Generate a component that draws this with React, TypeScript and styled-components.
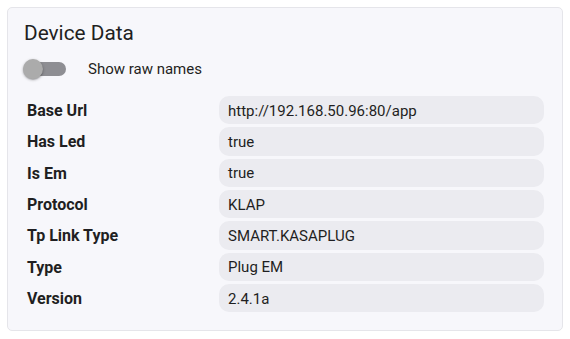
import React, { useState } from "react";
import styled, { createGlobalStyle } from "styled-components";

const GlobalStyle = createGlobalStyle`
  html, body { margin: 0; padding: 0; background: #ffffff; }
  body {
    font-family: Roboto, "Noto Sans", "Liberation Sans", sans-serif;
    color: #1f1f22;
  }
`;

const Page = styled.div`
  padding: 7px;
`;

const Card = styled.section`
  background: #f7f7fb;
  border: 1px solid #e5e5ea;
  border-radius: 5px;
  padding: 13px 16px 18px 16px;
  box-sizing: border-box;
  height: 324px;
  display: flex;
  flex-direction: column;
`;

const Title = styled.h2`
  margin: 0;
  font-size: 20.8px;
  line-height: 24px;
  font-weight: 400;
  color: #1f1f22;
`;

const ToggleRow = styled.label`
  display: flex;
  align-items: center;
  height: 28px;
  margin-top: 10px;
  cursor: pointer;
  user-select: none;
`;

const SwitchBox = styled.span`
  position: relative;
  width: 44px;
  height: 28px;
  margin-left: -2px;
  flex-shrink: 0;
`;

const Track = styled.span<{ $on: boolean }>`
  position: absolute;
  left: 7px;
  right: 0;
  top: 7px;
  height: 14px;
  border-radius: 7px;
  background: ${(p) => (p.$on ? "#8fa6d8" : "#8e8e93")};
`;

const Thumb = styled.span<{ $on: boolean }>`
  position: absolute;
  top: 4px;
  left: ${(p) => (p.$on ? "23px" : "1px")};
  width: 20px;
  height: 20px;
  border-radius: 50%;
  background: ${(p) => (p.$on ? "#3f63b8" : "#ababab")};
  box-shadow: 0 1px 3px rgba(0, 0, 0, 0.3), 0 1px 1px rgba(0, 0, 0, 0.14);
  transition: left 0.15s;
`;

const ToggleText = styled.span`
  margin-left: 22px;
  font-size: 15px;
  color: #1f1f22;
`;

const DataGrid = styled.dl`
  margin: 13px 2px 0 3px;
  display: grid;
  grid-template-columns: 192px 1fr;
  grid-auto-rows: 28.33px;
  row-gap: 3px;
  align-items: center;
`;

const Key = styled.dt`
  font-size: 16px;
  font-weight: 700;
  color: #1f1f22;
  padding-top: 1px;
`;

const Value = styled.dd`
  margin: 0;
  height: 100%;
  display: flex;
  align-items: center;
  padding: 1px 9px 0 9px;
  box-sizing: border-box;
  border-radius: 10px;
  background: #ebebf0;
  font-size: 15px;
  color: #1f1f22;
`;

const rows: [string, string, string][] = [
  ["base_url", "Base Url", "http://192.168.50.96:80/app"],
  ["has_led", "Has Led", "true"],
  ["is_em", "Is Em", "true"],
  ["protocol", "Protocol", "KLAP"],
  ["tp_link_type", "Tp Link Type", "SMART.KASAPLUG"],
  ["type", "Type", "Plug EM"],
  ["version", "Version", "2.4.1a"],
];

export default function App() {
  const [raw, setRaw] = useState(false);
  return (
    <>
      <GlobalStyle />
      <Page>
        <Card>
          <Title>Device Data</Title>
          <ToggleRow onClick={() => setRaw((v) => !v)}>
            <SwitchBox>
              <Track $on={raw} />
              <Thumb $on={raw} />
            </SwitchBox>
            <ToggleText>Show raw names</ToggleText>
          </ToggleRow>
          <DataGrid>
            {rows.map(([k, label, v]) => (
              <React.Fragment key={k}>
                <Key>{raw ? k : label}</Key>
                <Value>{v}</Value>
              </React.Fragment>
            ))}
          </DataGrid>
        </Card>
      </Page>
    </>
  );
}
